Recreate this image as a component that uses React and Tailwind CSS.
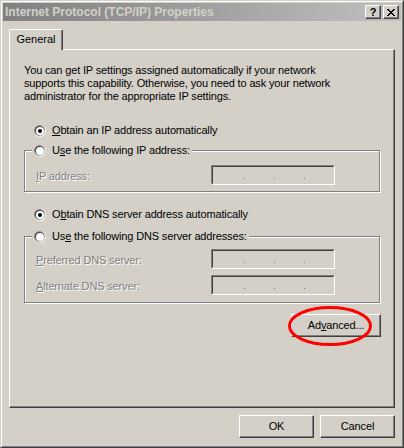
import React from 'react'

function Radio({ checked }) {
  return (
    <svg width="12" height="12" viewBox="0 0 12 12" className="shrink-0">
      <circle cx="6" cy="6" r="6" fill="#ffffff" />
      <circle cx="5.6" cy="5.6" r="5.6" fill="#808080" />
      <circle cx="6" cy="6" r="5" fill="#d4d0c8" />
      <circle cx="5.6" cy="5.6" r="4.6" fill="#404040" />
      <circle cx="6" cy="6" r="4" fill="#ffffff" />
      {checked && <circle cx="6" cy="6" r="2" fill="#000000" />}
    </svg>
  )
}

function Button({ children, className = '' }) {
  return (
    <div
      className={`flex h-[23px] items-center justify-center border border-t-white border-l-white border-r-[#404040] border-b-[#404040] [box-shadow:inset_-1px_-1px_0_#808080] ${className}`}
    >
      {children}
    </div>
  )
}

function CaptionButton({ children }) {
  return (
    <div className="flex h-[14px] w-[16px] items-center justify-center border border-t-white border-l-white border-r-[#404040] border-b-[#404040] bg-[#d4d0c8] [box-shadow:inset_-1px_-1px_0_#808080]">
      {children}
    </div>
  )
}

function IpField() {
  return (
    <div className="h-[20px] w-[124px] border border-t-[#808080] border-l-[#808080] border-r-white border-b-white">
      <div className="flex h-full gap-[29px] border border-t-[#404040] border-l-[#404040] border-r-[#d4d0c8] border-b-[#d4d0c8] pl-[31px] pt-[11px]">
        <span className="h-px w-px bg-[#808080]" />
        <span className="h-px w-px bg-[#808080]" />
        <span className="h-px w-px bg-[#808080]" />
      </div>
    </div>
  )
}

function Field({ children }) {
  return (
    <div className="flex items-center pl-[11px]">
      <span className="w-[175px] pt-[2px] text-[#808080] [text-shadow:1px_1px_0_#ffffff]">
        {children}
      </span>
      <IpField />
    </div>
  )
}

function Legend({ children }) {
  return (
    <div className="-mt-[7px] ml-[7px] flex h-[13px] w-fit items-center gap-[6px] bg-[#d4d0c8] px-[2px]">
      <Radio />
      <span className="whitespace-nowrap">{children}</span>
    </div>
  )
}

export default function App() {
  return (
    <div className="relative h-[448px] w-[404px] border border-t-[#d4d0c8] border-l-[#d4d0c8] border-r-[#404040] border-b-[#404040] bg-[#d4d0c8] font-['Liberation_Sans',Arial,sans-serif] text-[11px] leading-[13px] tracking-[-0.15px] text-black">
      <div className="flex h-full flex-col border border-t-white border-l-white border-r-[#808080] border-b-[#808080] p-px">
        <div className="flex h-[18px] items-center justify-between bg-gradient-to-r from-[#808080] to-[#c0c0c0] pl-[2px] pr-[2px]">
          <span className="whitespace-nowrap text-[12px] font-bold tracking-normal text-[#d4d0c8]">
            Internet Protocol (TCP/IP) Properties
          </span>
          <div className="flex gap-[2px]">
            <CaptionButton>
              <span className="font-bold leading-none">?</span>
            </CaptionButton>
            <CaptionButton>
              <svg width="8" height="7" viewBox="0 0 8 7">
                <path d="M0 0 L7 7 M1 0 L8 7 M7 0 L0 7 M8 0 L1 7" stroke="#000" strokeWidth="1" />
              </svg>
            </CaptionButton>
          </div>
        </div>

        <div className="flex flex-1 flex-col px-[6px] pt-[8px]">
          <div className="relative z-10 -mb-px flex h-[21px] w-[54px] items-center justify-center rounded-t-[2px] border border-b-0 border-t-white border-l-white border-r-[#404040] bg-[#d4d0c8] pb-[1px] tracking-normal [box-shadow:inset_-1px_0_0_#808080]">
            General
          </div>

          <div className="flex h-[359px] w-[386px] flex-col border border-t-white border-l-white border-r-[#404040] border-b-[#404040] pl-[14px] pt-[14px] [box-shadow:inset_-1px_-1px_0_#808080]">
            <p className="whitespace-nowrap">
              You can get IP settings assigned automatically if your network
              <br />
              supports this capability. Otherwise, you need to ask your network
              <br />
              administrator for the appropriate IP settings.
            </p>

            <div className="mt-[21px] flex h-[13px] items-center gap-[6px] pl-[10px]">
              <Radio checked />
              <span>
                <u>O</u>btain an IP address automatically
              </span>
            </div>

            <div className="mt-[13px] h-[42px] w-[356px] border border-[#808080] [box-shadow:1px_1px_0_#ffffff,inset_1px_1px_0_#ffffff]">
              <Legend>
                U<u>s</u>e the following IP address:
              </Legend>
              <div className="mt-[8px]">
                <Field>
                  <u>I</u>P address:
                </Field>
              </div>
            </div>

            <div className="mt-[16px] flex h-[13px] items-center gap-[6px] pl-[10px]">
              <Radio checked />
              <span>
                O<u>b</u>tain DNS server address automatically
              </span>
            </div>

            <div className="mt-[15px] h-[67px] w-[356px] border border-[#808080] [box-shadow:1px_1px_0_#ffffff,inset_1px_1px_0_#ffffff]">
              <Legend>
                Us<u>e</u> the following DNS server addresses:
              </Legend>
              <div className="mt-[6px] flex flex-col gap-[6px]">
                <Field>
                  <u>P</u>referred DNS server:
                </Field>
                <Field>
                  <u>A</u>lternate DNS server:
                </Field>
              </div>
            </div>

            <div className="mt-[11px] flex w-[357px] justify-end">
              <Button className="w-[90px]">
                <span>
                  Ad<u>v</u>anced...
                </span>
              </Button>
            </div>
          </div>

          <div className="mt-[7px] flex w-[386px] justify-end gap-[6px]">
            <Button className="w-[75px]">OK</Button>
            <Button className="w-[75px]">Cancel</Button>
          </div>
        </div>
      </div>

      <svg
        className="pointer-events-none absolute left-[285px] top-[303px]"
        width="88"
        height="44"
        viewBox="0 0 88 44"
      >
        <ellipse cx="44" cy="22" rx="40.5" ry="18.5" fill="none" stroke="#f00" strokeWidth="3" />
      </svg>
    </div>
  )
}
